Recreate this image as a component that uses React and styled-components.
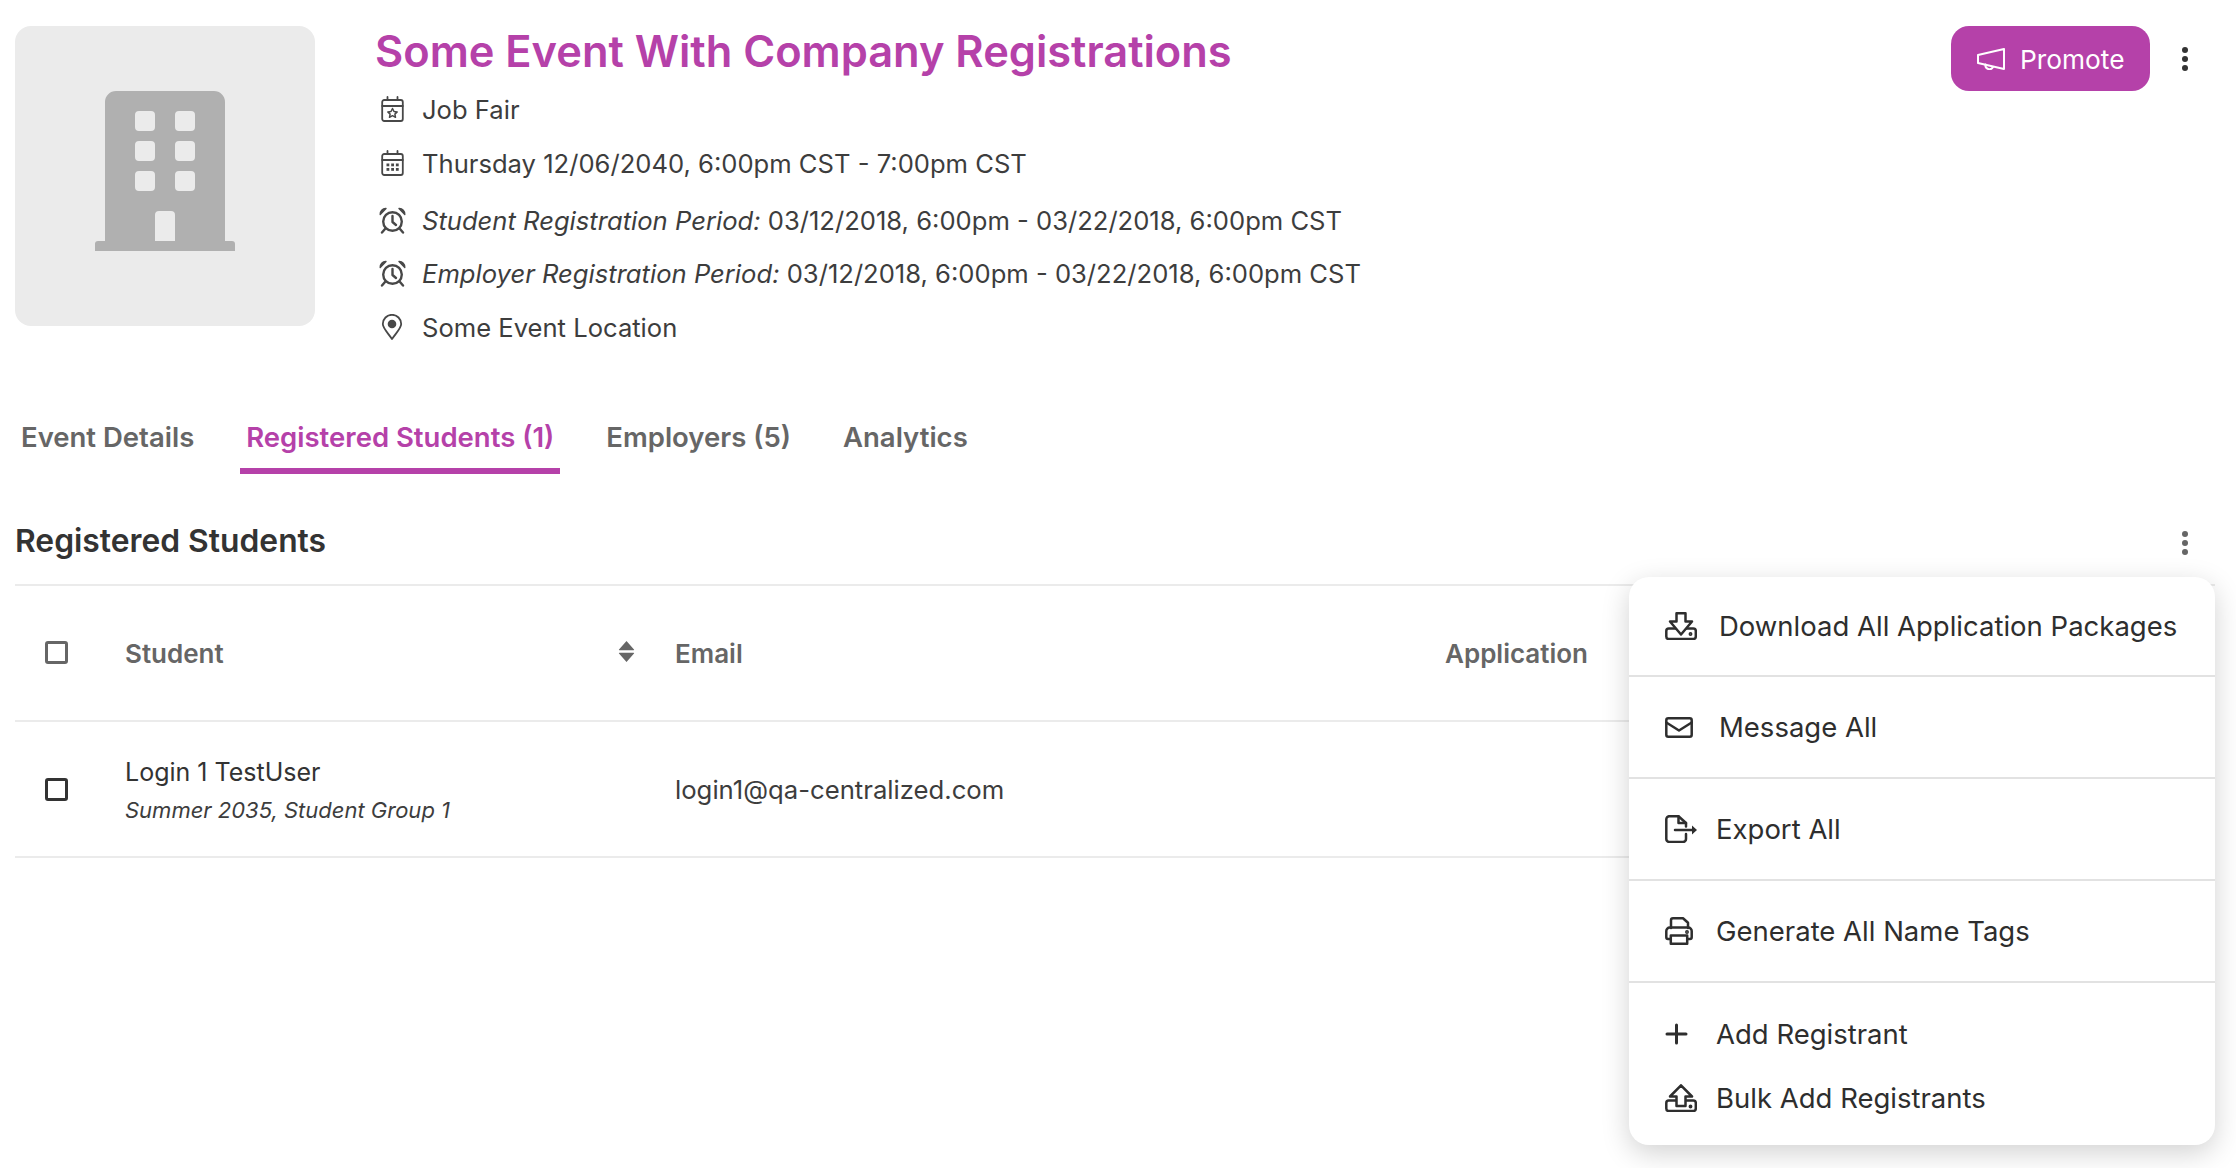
import React from "react";
import styled, { createGlobalStyle } from "styled-components";

const Global = createGlobalStyle`
  html, body { margin: 0; padding: 0; background: #fff; }
  body { font-family: "Inter", "Noto Sans", sans-serif; color: #333; }
  * { box-sizing: border-box; }
`;
const PURPLE = "#b541a9";

const Page = styled.div`
  position: relative;
  width: 2236px;
  height: 1168px;
  padding: 26px 21px 0 15px;
  overflow: hidden;
`;
const Header = styled.header`
  display: flex;
  align-items: flex-start;
  height: 332px;
`;
const Cover = styled.div`
  flex: none;
  width: 300px;
  height: 300px;
  border-radius: 16px;
  background: #ebebeb;
`;
const Info = styled.div`
  margin-left: 61px;
  flex: 1;
`;
const Title = styled.h1`
  margin: 0 0 0 -1px;
  height: 56px;
  font-size: 43.400px;
  line-height: 50px;
  font-weight: 600;
  color: ${PURPLE};
  white-space: nowrap;
`;
const MetaRow = styled.div`
  display: flex;
  align-items: center;
  height: ${(p) => p.$h}px;
  font-size: 25.600px;
  color: #3d3d3d;
  white-space: nowrap;
`;
const MetaIcon = styled.span`
  flex: none;
  width: 46px;
  padding-right: 14px;
  display: flex;
  justify-content: center;
  color: #484848;
`;
const Actions = styled.div`
  display: flex;
  align-items: center;
  gap: 32px;
  margin-right: 27px;
`;
const PromoteButton = styled.button`
  display: flex;
  align-items: center;
  gap: 15px;
  height: 65px;
  width: 199px;
  padding: 0 0 0 26px;
  border: 0;
  border-radius: 18px;
  background: ${PURPLE};
  color: #fff;
  font: 400 26.300px "Inter", sans-serif;
`;
const PromoteLabel = styled.span`
  margin-top: 2px;
`;
const Dots = styled.span`
  display: flex;
  flex-direction: column;
  gap: 3px;
  margin-top: ${(p) => p.$top || 0}px;
  i {
    width: 6px;
    height: 6px;
    border-radius: 50%;
    background: ${(p) => p.$color};
  }
`;
const Tabs = styled.nav`
  display: flex;
  gap: 40px;
  margin-top: 42px;
`;
const Tab = styled.div`
  height: 74px;
  padding: 6px 6px 0;
  display: flex;
  align-items: center;
  font-size: 27.500px;
  font-weight: 600;
  color: ${(p) => (p.$active ? PURPLE : "#666")};
  border-bottom: 6px solid ${(p) => (p.$active ? PURPLE : "transparent")};
`;
const SectionHead = styled.div`
  margin-top: 38px;
  height: 74px;
  padding-bottom: 16px;
  padding-right: 27px;
  display: flex;
  align-items: center;
  justify-content: space-between;
  border-bottom: 2px solid #ebebeb;
`;
const SectionTitle = styled.h2`
  margin: 0;
  font-size: 31.800px;
  font-weight: 600;
  color: #333;
`;
const TableRow = styled.div`
  display: grid;
  grid-template-columns: 110px 550px 770px 1fr;
  align-items: center;
  height: ${(p) => p.$h}px;
  border-bottom: 2px solid #ebebeb;
`;
const CheckCell = styled.div`
  padding-left: 30px;
  display: flex;
`;
const Check = styled.span`
  width: 23px;
  height: 23px;
  margin-top: ${(p) => p.$top || 0}px;
  border: 3px solid ${(p) => p.$color};
  border-radius: 3px;
`;
const HeadCell = styled.div`
  display: flex;
  align-items: center;
  justify-content: space-between;
  font-size: 26px;
  font-weight: 600;
  color: #666;
  padding-right: 40px;
  svg {
    margin-top: -3px;
  }
`;
const NameCell = styled.div`
  display: flex;
  flex-direction: column;
  gap: 10px;
  padding-top: 1px;
`;
const Name = styled.div`
  font-size: 25px;
  color: #333;
`;
const Sub = styled.div`
  font-size: 22px;
  font-style: italic;
  color: #3d3d3d;
`;
const EmailCell = styled.div`
  font-size: 25.700px;
  color: #3d3d3d;
`;
const Menu = styled.div`
  position: absolute;
  left: 1629px;
  top: 577px;
  width: 586px;
  background: #fff;
  border-radius: 20px;
  box-shadow: 0 8px 28px rgba(0, 0, 0, 0.18);
`;
const MenuGroup = styled.div`
  padding: ${(p) => (p.$last ? "19px 36px 15px" : "0 36px")};
  height: ${(p) => p.$h}px;
  display: flex;
  flex-direction: column;
  justify-content: center;
  border-bottom: ${(p) => (p.$last ? "0" : "2px solid #e2e2e2")};
`;
const MenuItem = styled.div`
  display: flex;
  align-items: center;
  height: 64px;
  font-size: 27.500px;
  color: #2e2e2e;
  white-space: nowrap;
`;
const MenuIcon = styled.span`
  flex: none;
  display: flex;
  width: 32px;
  margin-right: ${(p) => p.$gap}px;
`;

const Stroke = ({ w, h, sw = 2, children }) => (
  <svg width={w} height={h} viewBox={`0 0 ${w} ${h}`} fill="none" stroke="currentColor" strokeWidth={sw} strokeLinecap="round" strokeLinejoin="round">
    {children}
  </svg>
);

const win = (x, y) => `M${x + 4} ${y}a4 4 0 0 0-4 4v12a4 4 0 0 0 4 4h12a4 4 0 0 0 4-4v-12a4 4 0 0 0-4-4z`;
const Building = () => (
  <svg width="300" height="300" viewBox="0 0 300 300">
    <path
      fill="#b0b0b0"
      fillRule="evenodd"
      d={`M90 76a11 11 0 0 1 11-11h98a11 11 0 0 1 11 11v139h7a3 3 0 0 1 3 3v7H80v-7a3 3 0 0 1 3-3h7z${win(120, 85)}${win(160, 85)}${win(120, 115)}${win(160, 115)}${win(120, 145)}${win(160, 145)}M144 185a4 4 0 0 0-4 4v26h20v-26a4 4 0 0 0-4-4z`}
    />
  </svg>
);

const CalStar = () => (
  <Stroke w={23} h={26} sw={1.800}>
    <rect x="1.200" y="4" width="20.600" height="21" rx="2" />
    <path d="M1.200 10h20.600M6.500 1v3M16.500 1v3" />
    <path d="M11.500 12.500l1.500 3 3.200.4-2.300 2.200.6 3.200-3-1.600-3 1.600.6-3.200-2.300-2.200 3.200-.4z" strokeWidth="1.500" />
  </Stroke>
);
const CalGrid = () => (
  <Stroke w={23} h={26} sw={1.800}>
    <rect x="1.200" y="4" width="20.600" height="21" rx="2" />
    <path d="M1.200 10h20.600M6.500 1v3M16.500 1v3" />
    <g fill="currentColor" stroke="none">
      {[5.500, 10.200, 14.900].flatMap((x) => [13.500, 18].map((y) => <rect key={`${x}-${y}`} x={x} y={y} width="2.800" height="2.800" />))}
    </g>
  </Stroke>
);
const Alarm = () => (
  <Stroke w={27} h={27} sw={2.400}>
    <circle cx="13.500" cy="14.500" r="9.300" />
    <path d="M13.500 9v6l3.500 3" />
    <path d="M1.200 7.500a5.500 5.500 0 0 1 5.800-6zM25.800 7.500a5.500 5.500 0 0 0-5.800-6z" fill="currentColor" strokeWidth="1.400" />
    <path d="M6 22l-3 3.500M21 22l3 3.500" />
  </Stroke>
);
const Pin = () => (
  <Stroke w={22} h={26} sw={1.800}>
    <path d="M11 25C6.500 18.500 1.800 14 1.800 10a9.200 9.200 0 0 1 18.400 0c0 4-4.700 8.500-9.200 15z" />
    <circle cx="11" cy="10" r="4.300" fill="currentColor" stroke="none" />
  </Stroke>
);
const Megaphone = () => (
  <Stroke w={28} h={22} sw={2}>
    <path d="M1 7L27 1v20L1 15z" />
    <path d="M8.500 16.500a4 4 0 0 0 7.500 2.500" />
  </Stroke>
);
const SortArrows = () => (
  <svg width="17" height="21" viewBox="0 0 17 21">
    <path fill="#666" d="M8.500 0l7.500 8.500q.5 .7-.5 .7H1.500q-1 0-.5-.7zM8.500 21L1 12.500q-.5-.7.5-.7h14q1 0 .5.7z" />
  </svg>
);
const TrayDown = () => (
  <Stroke w={32} h={28} sw={2.500}>
    <rect x="1.300" y="16.500" width="29.500" height="10.500" rx="2.500" />
    <path d="M11.500 1.300h9V9.500H27L16 22.500 5 9.500h6.500z" fill="#fff" />
    <circle cx="25.500" cy="22" r=".7" fill="currentColor" />
  </Stroke>
);
const TrayUp = () => (
  <Stroke w={32} h={28} sw={2.500}>
    <rect x="1.300" y="16.500" width="29.500" height="10.500" rx="2.500" />
    <path d="M16 1.300L27 12.500h-6.500V22h-9v-9.500H5z" fill="#fff" />
    <circle cx="25.500" cy="22.500" r=".7" fill="currentColor" />
  </Stroke>
);
const Mail = () => (
  <Stroke w={28} h={21} sw={2.500}>
    <rect x="1.300" y="1.300" width="25.400" height="18.400" rx="2" />
    <path d="M1.300 5.500L14 13.500l12.700-8" />
  </Stroke>
);
const FileExport = () => (
  <Stroke w={32} h={28} sw={2.500}>
    <path d="M21 11.500V8l-7.500-6.800H4.300a3 3 0 0 0-3 3V24a3 3 0 0 0 3 3H18a3 3 0 0 0 3-3v-5" />
    <path d="M13.500 1.500V8H21M10 15h17" />
    <path d="M27 10.500L32 15l-5 4.500z" fill="currentColor" stroke="none" />
  </Stroke>
);
const Printer = () => (
  <Stroke w={28} h={28} sw={2.500}>
    <path d="M6 11V3.300a2 2 0 0 1 2-2h10l5 4.500V11" />
    <path d="M5.500 22H3a1.700 1.700 0 0 1-1.700-1.700V14a3.500 3.500 0 0 1 3.500-3.500h18.400a3.500 3.500 0 0 1 3.500 3.500v6.300A1.700 1.700 0 0 1 25 22h-2.500" />
    <path d="M5.800 18.500h16.400v8.200H5.800z" />
    <circle cx="22" cy="15" r=".7" fill="currentColor" />
  </Stroke>
);
const Plus = () => (
  <Stroke w={23} h={22} sw={3}>
    <path d="M11.500 2v18M2 11h19" />
  </Stroke>
);

const menu = [
  { h: 100, items: [[<TrayDown />, 22, "Download All Application Packages"]] },
  { h: 102, items: [[<Mail />, 22, "Message All"]] },
  { h: 102, items: [[<FileExport />, 19, "Export All"]] },
  { h: 102, items: [[<Printer />, 19, "Generate All Name Tags"]] },
  { h: 162, last: true, items: [[<Plus />, 19, "Add Registrant"], [<TrayUp />, 19, "Bulk Add Registrants"]] },
];

const ThreeDots = ({ color, top }) => (
  <Dots $color={color} $top={top}><i /><i /><i /></Dots>
);

export default function App() {
  return (
    <Page>
      <Global />
      <Header>
        <Cover><Building /></Cover>
        <Info>
          <Title>Some Event With Company Registrations</Title>
          <MetaRow $h={54}><MetaIcon><CalStar /></MetaIcon>Job Fair</MetaRow>
          <MetaRow $h={54}><MetaIcon><CalGrid /></MetaIcon>Thursday 12/06/2040, 6:00pm CST - 7:00pm CST</MetaRow>
          <MetaRow $h={60}><MetaIcon><Alarm /></MetaIcon><span><em>Student Registration Period:</em> 03/12/2018, 6:00pm - 03/22/2018, 6:00pm CST</span></MetaRow>
          <MetaRow $h={46}><MetaIcon><Alarm /></MetaIcon><span><em>Employer Registration Period:</em> 03/12/2018, 6:00pm - 03/22/2018, 6:00pm CST</span></MetaRow>
          <MetaRow $h={62}><MetaIcon><Pin /></MetaIcon>Some Event Location</MetaRow>
        </Info>
        <Actions>
          <PromoteButton><Megaphone /><PromoteLabel>Promote</PromoteLabel></PromoteButton>
          <ThreeDots color="#333" />
        </Actions>
      </Header>
      <Tabs>
        <Tab>Event Details</Tab>
        <Tab $active>Registered Students (1)</Tab>
        <Tab>Employers (5)</Tab>
        <Tab>Analytics</Tab>
      </Tabs>
      <SectionHead>
        <SectionTitle>Registered Students</SectionTitle>
        <ThreeDots color="#666" top={6} />
      </SectionHead>
      <TableRow $h={136}>
        <CheckCell><Check $color="#666" $top={-2} /></CheckCell>
        <HeadCell>Student<SortArrows /></HeadCell>
        <HeadCell>Email</HeadCell>
        <HeadCell>Application</HeadCell>
      </TableRow>
      <TableRow $h={136}>
        <CheckCell><Check $color="#333" /></CheckCell>
        <NameCell><Name>Login 1 TestUser</Name><Sub>Summer 2035, Student Group 1</Sub></NameCell>
        <EmailCell>login1@qa-centralized.com</EmailCell>
        <span />
      </TableRow>
      <Menu>
        {menu.map((group, i) => (
          <MenuGroup key={i} $h={group.h} $last={group.last}>
            {group.items.map(([icon, gap, label]) => (
              <MenuItem key={label}><MenuIcon $gap={gap}>{icon}</MenuIcon>{label}</MenuItem>
            ))}
          </MenuGroup>
        ))}
      </Menu>
    </Page>
  );
}
